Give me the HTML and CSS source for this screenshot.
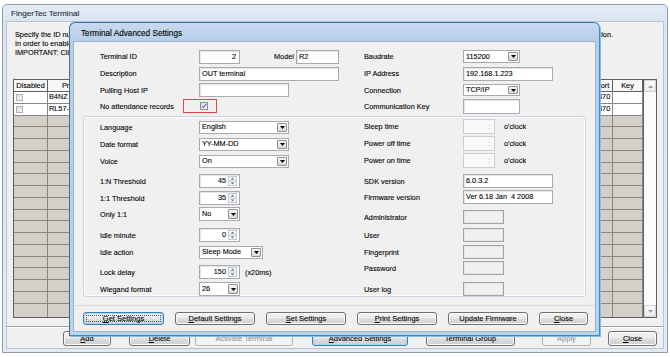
FILE: index.html
```html
<!DOCTYPE html>
<html>
<head>
<meta charset="utf-8">
<title>FingerTec Terminal</title>
<link rel="stylesheet" href="styles.css">
</head>
<body>
<div class="app">
  <div class="win">
    <div class="win-title">FingerTec Terminal</div>
    <div class="win-body">
      <div class="intro">
        <p class="intro-line"><span>Specify the ID number, product name and IP address of each terminal</span><span>used for communication.</span></p>
        <p class="intro-line"><span>In order to enable a terminal, select it and click Activate Terminal.</span></p>
        <p class="intro-line"><span>IMPORTANT: Click Apply to save the changes.</span></p>
      </div>
      <div class="grid">
        <div class="g-table">
          <div class="g-head">
            <div class="g-cell c">Disabled</div>
            <div class="g-cell c">Product</div>
            <div class="g-cell"></div>
            <div class="g-cell c">Port</div>
            <div class="g-cell c">Key</div>
          </div>
          <div class="g-row data"><div class="g-cell"><span class="g-chk"></span></div><div class="g-cell">B4NZ</div><div class="g-cell"></div><div class="g-cell">4370</div><div class="g-cell"></div></div>
          <div class="g-row data"><div class="g-cell"><span class="g-chk"></span></div><div class="g-cell">RL57-</div><div class="g-cell"></div><div class="g-cell">4370</div><div class="g-cell"></div></div>
          <div class="g-row"><div class="g-cell"></div><div class="g-cell"></div><div class="g-cell"></div><div class="g-cell"></div><div class="g-cell"></div></div>
          <div class="g-row"><div class="g-cell"></div><div class="g-cell"></div><div class="g-cell"></div><div class="g-cell"></div><div class="g-cell"></div></div>
          <div class="g-row"><div class="g-cell"></div><div class="g-cell"></div><div class="g-cell"></div><div class="g-cell"></div><div class="g-cell"></div></div>
          <div class="g-row"><div class="g-cell"></div><div class="g-cell"></div><div class="g-cell"></div><div class="g-cell"></div><div class="g-cell"></div></div>
          <div class="g-row"><div class="g-cell"></div><div class="g-cell"></div><div class="g-cell"></div><div class="g-cell"></div><div class="g-cell"></div></div>
          <div class="g-row"><div class="g-cell"></div><div class="g-cell"></div><div class="g-cell"></div><div class="g-cell"></div><div class="g-cell"></div></div>
          <div class="g-row"><div class="g-cell"></div><div class="g-cell"></div><div class="g-cell"></div><div class="g-cell"></div><div class="g-cell"></div></div>
          <div class="g-row"><div class="g-cell"></div><div class="g-cell"></div><div class="g-cell"></div><div class="g-cell"></div><div class="g-cell"></div></div>
          <div class="g-row"><div class="g-cell"></div><div class="g-cell"></div><div class="g-cell"></div><div class="g-cell"></div><div class="g-cell"></div></div>
          <div class="g-row"><div class="g-cell"></div><div class="g-cell"></div><div class="g-cell"></div><div class="g-cell"></div><div class="g-cell"></div></div>
          <div class="g-row"><div class="g-cell"></div><div class="g-cell"></div><div class="g-cell"></div><div class="g-cell"></div><div class="g-cell"></div></div>
          <div class="g-row"><div class="g-cell"></div><div class="g-cell"></div><div class="g-cell"></div><div class="g-cell"></div><div class="g-cell"></div></div>
          <div class="g-row"><div class="g-cell"></div><div class="g-cell"></div><div class="g-cell"></div><div class="g-cell"></div><div class="g-cell"></div></div>
          <div class="g-row"><div class="g-cell"></div><div class="g-cell"></div><div class="g-cell"></div><div class="g-cell"></div><div class="g-cell"></div></div>
          <div class="g-row"><div class="g-cell"></div><div class="g-cell"></div><div class="g-cell"></div><div class="g-cell"></div><div class="g-cell"></div></div>
          <div class="g-row"><div class="g-cell"></div><div class="g-cell"></div><div class="g-cell"></div><div class="g-cell"></div><div class="g-cell"></div></div>
          <div class="g-row last"><div class="g-cell"></div><div class="g-cell"></div><div class="g-cell"></div><div class="g-cell"></div><div class="g-cell"></div></div>
        </div>
        <div class="vscroll">
          <div class="sb-btn"><svg width="5" height="3" viewBox="0 0 5 3"><polygon points="0,3 5,3 2.5,0" fill="#9aa0a6"/></svg></div>
          <div class="sb-track"></div>
          <div class="sb-btn"><svg width="5" height="3" viewBox="0 0 5 3"><polygon points="0,0 5,0 2.5,3" fill="#9aa0a6"/></svg></div>
        </div>
      </div>
      <div class="sep"></div>
      <div class="main-btns">
        <div class="btn b-add"><span><u>A</u>dd</span></div>
        <div class="btn b-del"><span><u>D</u>elete</span></div>
        <div class="btn b-act disabled"><span>Activate Terminal</span></div>
        <div class="btn b-adv default"><span><u>A</u>dvanced Settings</span></div>
        <div class="btn b-grp"><span>Terminal Group</span></div>
        <div class="btn b-apply disabled"><span>Apply</span></div>
        <div class="btn b-close"><span><u>C</u>lose</span></div>
      </div>
    </div>
  </div>

  <div class="dlg">
    <div class="dlg-title">Terminal Advanced Settings</div>
    <div class="dlg-body">
      <div class="top-form">
        <div class="fld">
          <span class="lbl">Terminal ID</span>
          <span class="tb r w41">2</span>
          <span class="lbl-model">Model</span>
          <span class="tb w43">R2</span>
        </div>
        <div class="fld">
          <span class="lbl">Baudrate</span>
          <span class="sel w57"><span class="sel-txt">115200</span><span class="dd"><svg width="5" height="3" viewBox="0 0 5 3"><polygon points="0,0 5,0 2.5,3" fill="#000"/></svg></span></span>
        </div>
        <div class="fld">
          <span class="lbl">Description</span>
          <span class="tb w140">OUT terminal</span>
        </div>
        <div class="fld">
          <span class="lbl">IP Address</span>
          <span class="tb w90">192.168.1.223</span>
        </div>
        <div class="fld">
          <span class="lbl">Pulling Host IP</span>
          <span class="tb w90"></span>
        </div>
        <div class="fld">
          <span class="lbl">Connection</span>
          <span class="sel w57 h12"><span class="sel-txt">TCP/IP</span><span class="dd"><svg width="5" height="3" viewBox="0 0 5 3"><polygon points="0,0 5,0 2.5,3" fill="#000"/></svg></span></span>
        </div>
        <div class="fld">
          <span class="lbl lbl-short">No attendance records</span>
          <span class="hl-box"><span class="chk"><svg width="6" height="6" viewBox="0 0 6 6"><path d="M0.8 3.2 L2.3 4.8 L5.3 0.8" fill="none" stroke="#2b3f8f" stroke-width="1"/></svg></span></span>
        </div>
        <div class="fld">
          <span class="lbl">Communication Key</span>
          <span class="tb w57 h15"></span>
        </div>
      </div>

      <div class="group">
        <div class="fld"><span class="lbl">Language</span><span class="sel w90"><span class="sel-txt">English</span><span class="dd"><svg width="5" height="3" viewBox="0 0 5 3"><polygon points="0,0 5,0 2.5,3" fill="#000"/></svg></span></span></div>
        <div class="fld up1"><span class="lbl">Sleep time</span><span class="time">:</span><span class="unit">o'clock</span></div>

        <div class="fld"><span class="lbl">Date format</span><span class="sel w90"><span class="sel-txt">YY-MM-DD</span><span class="dd"><svg width="5" height="3" viewBox="0 0 5 3"><polygon points="0,0 5,0 2.5,3" fill="#000"/></svg></span></span></div>
        <div class="fld up1"><span class="lbl">Power off time</span><span class="time">:</span><span class="unit">o'clock</span></div>

        <div class="fld"><span class="lbl">Voice</span><span class="sel w90"><span class="sel-txt">On</span><span class="dd"><svg width="5" height="3" viewBox="0 0 5 3"><polygon points="0,0 5,0 2.5,3" fill="#000"/></svg></span></span></div>
        <div class="fld up1"><span class="lbl">Power on time</span><span class="time">:</span><span class="unit">o'clock</span></div>

        <div class="fld"><span class="lbl">1:N Threshold</span><span class="spin w41"><span class="spin-txt">45</span><span class="spin-arr"><svg width="9" height="10" viewBox="0 0 9 10"><rect x="0.5" y="0.5" width="8" height="9" fill="#f8f8f8" stroke="#c4c8cc"/><line x1="1" y1="5" x2="8" y2="5" stroke="#c4c8cc"/><polygon points="2.5,3.5 6.5,3.5 4.5,1.8" fill="#4c6a9c"/><polygon points="2.5,6.5 6.5,6.5 4.5,8.2" fill="#4c6a9c"/></svg></span></span></div>
        <div class="fld"><span class="lbl">SDK version</span><span class="tb w90">6.0.3.2</span></div>

        <div class="fld"><span class="lbl">1:1 Threshold</span><span class="spin w41"><span class="spin-txt">35</span><span class="spin-arr"><svg width="9" height="10" viewBox="0 0 9 10"><rect x="0.5" y="0.5" width="8" height="9" fill="#f8f8f8" stroke="#c4c8cc"/><line x1="1" y1="5" x2="8" y2="5" stroke="#c4c8cc"/><polygon points="2.5,3.5 6.5,3.5 4.5,1.8" fill="#4c6a9c"/><polygon points="2.5,6.5 6.5,6.5 4.5,8.2" fill="#4c6a9c"/></svg></span></span></div>
        <div class="fld up1"><span class="lbl">Firmware version</span><span class="tb w90">Ver 6.18 Jan&nbsp;&nbsp;4 2008</span></div>

        <div class="fld"><span class="lbl">Only 1:1</span><span class="sel w41 h14"><span class="sel-txt">No</span><span class="dd"><svg width="5" height="3" viewBox="0 0 5 3"><polygon points="0,0 5,0 2.5,3" fill="#000"/></svg></span></span></div>
        <div class="fld down3"><span class="lbl">Administrator</span><span class="dis"></span></div>

        <div class="fld"><span class="lbl">Idle minute</span><span class="spin w41"><span class="spin-txt">0</span><span class="spin-arr"><svg width="9" height="10" viewBox="0 0 9 10"><rect x="0.5" y="0.5" width="8" height="9" fill="#f8f8f8" stroke="#c4c8cc"/><line x1="1" y1="5" x2="8" y2="5" stroke="#c4c8cc"/><polygon points="2.5,3.5 6.5,3.5 4.5,1.8" fill="#4c6a9c"/><polygon points="2.5,6.5 6.5,6.5 4.5,8.2" fill="#4c6a9c"/></svg></span></span></div>
        <div class="fld"><span class="lbl">User</span><span class="dis"></span></div>

        <div class="fld"><span class="lbl">Idle action</span><span class="sel w64"><span class="sel-txt">Sleep Mode</span><span class="dd"><svg width="5" height="3" viewBox="0 0 5 3"><polygon points="0,0 5,0 2.5,3" fill="#000"/></svg></span></span></div>
        <div class="fld"><span class="lbl">Fingerprint</span><span class="dis"></span></div>

        <div class="fld down4"><span class="lbl">Lock delay</span><span class="spin w41"><span class="spin-txt">150</span><span class="spin-arr"><svg width="9" height="10" viewBox="0 0 9 10"><rect x="0.5" y="0.5" width="8" height="9" fill="#f8f8f8" stroke="#c4c8cc"/><line x1="1" y1="5" x2="8" y2="5" stroke="#c4c8cc"/><polygon points="2.5,3.5 6.5,3.5 4.5,1.8" fill="#4c6a9c"/><polygon points="2.5,6.5 6.5,6.5 4.5,8.2" fill="#4c6a9c"/></svg></span></span><span class="unit unit-ms">(x20ms)</span></div>
        <div class="fld"><span class="lbl">Password</span><span class="dis"></span></div>

        <div class="fld"><span class="lbl">Wiegand format</span><span class="sel w41 h14"><span class="sel-txt">26</span><span class="dd"><svg width="5" height="3" viewBox="0 0 5 3"><polygon points="0,0 5,0 2.5,3" fill="#000"/></svg></span></span></div>
        <div class="fld"><span class="lbl">User log</span><span class="dis"></span></div>
      </div>

      <div class="dlg-sep"></div>

      <div class="dlg-btns">
        <div class="btn sm w81 default"><span class="focus-ring"><span><u>G</u>et Settings</span></span></div>
        <div class="btn sm w80"><span><u>D</u>efault Settings</span></div>
        <div class="btn sm w80"><span><u>S</u>et Settings</span></div>
        <div class="btn sm w80"><span><u>P</u>rint Settings</span></div>
        <div class="btn sm w80"><span>Update Firmware</span></div>
        <div class="btn sm w49"><span><u>C</u>lose</span></div>
      </div>
    </div>
  </div>
</div>
</body>
</html>
```

FILE: styles.css
```css
* { box-sizing: border-box; }
html, body { margin: 0; padding: 0; background: #ffffff; }
body {
  font-family: "Liberation Sans", Arial, sans-serif;
  font-size: 7.3px;
  color: #000;
  -webkit-text-stroke: 0.1px #000;
}
p { margin: 0; }
u { text-decoration: underline; text-underline-offset: 1px; }

.app { position: relative; width: 670px; height: 357px; overflow: hidden; }

/* ---------- main window ---------- */
.win {
  margin: 4px 0 0 2px;
  width: 666px;
  height: 349px;
  border: 1px solid #8d9bad;
  border-radius: 5px 5px 0 0;
  background: linear-gradient(#e4ecf6 0px, #d9e4f1 17px, #dde7f2 60px, #e2eaf4 100%);
  padding: 0 4px 4px;
  display: flex;
  flex-direction: column;
}
.win-title {
  height: 17px;
  line-height: 18px;
  padding-left: 4px;
  font-size: 8.1px;
  color: #1e2a38;
  -webkit-text-stroke: 0.1px #1e2a38;
}
.win-body {
  flex: 1;
  background: #f0f0f0;
  padding: 8px 6px 0;
  display: flex;
  flex-direction: column;
  box-shadow: 0 0 0 1px #b7c4d3;
}
.intro { line-height: 9px; width: 600px; }
.intro-line { display: flex; justify-content: space-between; white-space: nowrap; padding-left: 2px; }

/* grid */
.grid {
  margin-top: 22px;
  height: 239px;
  border: 1px solid #606060;
  display: flex;
  overflow: hidden;
  background: #d4d0c8;
}
.g-table { flex: 1; overflow: hidden; }
.g-head, .g-row {
  display: grid;
  grid-template-columns: 34px 54px 1fr 20px 30px;
}
.g-head {
  height: 12px;
  background: #f7f7f7;
  border-bottom: 1px solid #606060;
  line-height: 11px;
}
.g-head .g-cell { border-right: 1px solid #606060; }
.g-row {
  height: 11.75px;
  border-bottom: 1px solid #8a867c;
}
.g-row.last { height: 14px; border-bottom: 0; }
.g-row .g-cell { border-right: 1px solid #8a867c; }
.g-row.data { background: #ffffff; line-height: 10px; }
.g-cell { padding-left: 1px; white-space: nowrap; overflow: hidden; display: flex; align-items: center; }
.g-cell.c { justify-content: center; padding-left: 0; }
.g-chk {
  width: 7px; height: 7px; margin-left: 1px;
  border: 1px solid #b3b3b3;
  background: linear-gradient(135deg, #dcdcdc, #f6f6f6);
}
.vscroll {
  width: 13px;
  border-left: 1px solid #606060;
  background: #f4f4f4;
  display: flex;
  flex-direction: column;
}
.sb-btn {
  height: 12px;
  border: 1px solid #d3d3d3;
  background: linear-gradient(#fbfbfb, #ececec);
  display: flex; align-items: center; justify-content: center;
}
.sb-track { flex: 1; background: #fbfbfb; }

.sep {
  margin: 8px -6px 0;
  height: 2px;
  border-top: 1px solid #a0a0a0;
  border-bottom: 1px solid #ffffff;
}
.main-btns {
  display: flex;
  margin-top: 3px;
  padding-left: 50px;
}
.main-btns .btn { height: 15px; }
.b-add { width: 48px; }
.b-del { width: 61px; margin-left: 18px; }
.b-act { width: 98px; margin-left: 5px; }
.b-adv { width: 96px; margin-left: 19px; }
.b-grp { width: 89px; margin-left: 18px; }
.b-apply { width: 49px; margin-left: 27px; }
.b-close { width: 49px; margin-left: 17px; }

/* buttons */
.btn {
  flex: none;
  border: 1px solid #707070;
  border-radius: 3px;
  background: linear-gradient(#f2f2f2 0%, #ebebeb 48%, #dddddd 52%, #cfcfcf 100%);
  box-shadow: inset 0 0 0 1px #fbfbfb;
  display: flex;
  align-items: center;
  justify-content: center;
  font-size: 7.5px;
  white-space: nowrap;
}
.btn.default { border-color: #3c7fb1; box-shadow: inset 0 0 0 1px #a8dcf6; }
.btn.disabled { border-color: #adb2b5; background: #f4f4f4; box-shadow: none; color: #8b8b8b; -webkit-text-stroke: 0; }
.btn.sm { height: 13px; }
.focus-ring {
  align-self: stretch;
  flex: 1;
  margin: 2px;
  border: 1px dotted #555;
  display: flex;
  align-items: center;
  justify-content: center;
}

/* ---------- dialog ---------- */
.dlg {
  position: absolute;
  left: 69px;
  top: 22px;
  width: 531px;
  height: 314px;
  border: 1px solid #3d6e9c;
  border-right-color: #2f8fd0;
  border-bottom-color: #2f8fd0;
  border-radius: 6px 6px 0 0;
  background: linear-gradient(#c6d9ef 0px, #b7cde8 19px, #bcd3ec 100%);
  padding: 0 4px 4px;
  display: flex;
  flex-direction: column;
  box-shadow: 1px 1px 0 #86bde6;
}
.dlg-title {
  height: 19px;
  line-height: 21px;
  padding-left: 7px;
  font-size: 8.2px;
  color: #000;
}
.dlg-body {
  flex: 1;
  background: #f0f0f0;
  padding: 6px 9px 0;
  box-shadow: 0 0 0 1px #9cb3cc;
}

.top-form {
  display: grid;
  grid-template-columns: 264px 1fr;
  grid-template-rows: 17px 17px 16px 16px;
  padding-left: 17px;
}
.fld { display: flex; align-items: center; white-space: nowrap; }
.lbl { width: 99px; flex: none; }
.lbl-short { width: 83px; }
.lbl-model { margin-left: 34px; width: 22px; }
.up1 { margin-top: -1px; }
.down3 { margin-top: 3px; }
.down4 { margin-top: 4px; }

.tb {
  height: 14px;
  border: 1px solid #a7abb0;
  box-shadow: inset 1px 1px 0 #e6e6e6;
  background: #fff;
  line-height: 12px;
  padding: 0 2px;
  overflow: hidden;
  flex: none;
}
.tb.r { text-align: right; padding-right: 3px; }
.h15 { height: 15px; }
.w41 { width: 41px; }
.w43 { width: 43px; }
.w57 { width: 57px; }
.w64 { width: 64px; }
.w90 { width: 90px; }
.w140 { width: 140px; }
.w80 { width: 80px; }
.w81 { width: 81px; }
.w49 { width: 49px; }

.sel {
  height: 13px;
  border: 1px solid #a7abb0;
  background: #fff;
  display: flex;
  align-items: center;
  padding-left: 2px;
  flex: none;
}
.sel.h12 { height: 12px; }
.sel.h14 { height: 14px; }
.sel-txt { flex: 1; line-height: 10px; }
.dd {
  flex: none;
  width: 10px;
  align-self: stretch;
  margin: 1px;
  border: 1px solid #8e9092;
  border-radius: 1px;
  background: linear-gradient(#f6f6f6, #dadada);
  display: flex;
  align-items: center;
  justify-content: center;
}
.dd svg { display: block; }

.hl-box {
  width: 34px;
  height: 14px;
  border: 1px solid #e0474c;
  display: flex;
  align-items: center;
  padding-left: 16px;
}
.chk {
  width: 8px; height: 8px;
  border: 1px solid #8f8f8f;
  background: linear-gradient(135deg, #dcdcdc, #f8f8f8);
  display: flex; align-items: center; justify-content: center;
}
.chk svg { display: block; }

.group {
  margin-top: 2px;
  height: 181px;
  border: 1px solid #c9d5e2;
  border-radius: 3px;
  box-shadow: inset 0 0 0 1px #ffffff;
  padding: 3px 0 0 16px;
  display: grid;
  grid-template-columns: 264px 1fr;
  grid-template-rows: 17px 17px 20px 17px 16px 21px 17px 16px 21px 15px;
  align-items: start;
}
.group .fld { height: 14px; }
.time {
  width: 32px; height: 15px;
  border: 1px solid #cdcdcd;
  background: #f9f9f9;
  color: #9c9c9c;
  -webkit-text-stroke: 0;
  text-align: right;
  padding-right: 4px;
  line-height: 13px;
  flex: none;
}
.unit { margin-left: 9px; }
.unit-ms { margin-left: 5px; }

.spin {
  height: 14px;
  border: 1px solid #a7abb0;
  box-shadow: inset 1px 1px 0 #e6e6e6;
  background: #fff;
  display: flex;
  align-items: center;
  flex: none;
}
.spin-txt { flex: 1; text-align: right; padding-right: 2px; line-height: 10px; }
.spin-arr { flex: none; width: 11px; display: flex; align-items: center; }
.spin-arr svg { display: block; }

.dis {
  width: 41px; height: 14px;
  border: 1px solid #a3a3a3;
  box-shadow: inset 0 0 0 1px #e4e4e4;
  background: #f0f0f0;
  flex: none;
}

.dlg-sep {
  margin: 8px -9px 0;
  border-top: 1px solid #d3dde8;
}
.dlg-btns {
  display: flex;
  gap: 11px;
  margin-top: 6px;
}
```
